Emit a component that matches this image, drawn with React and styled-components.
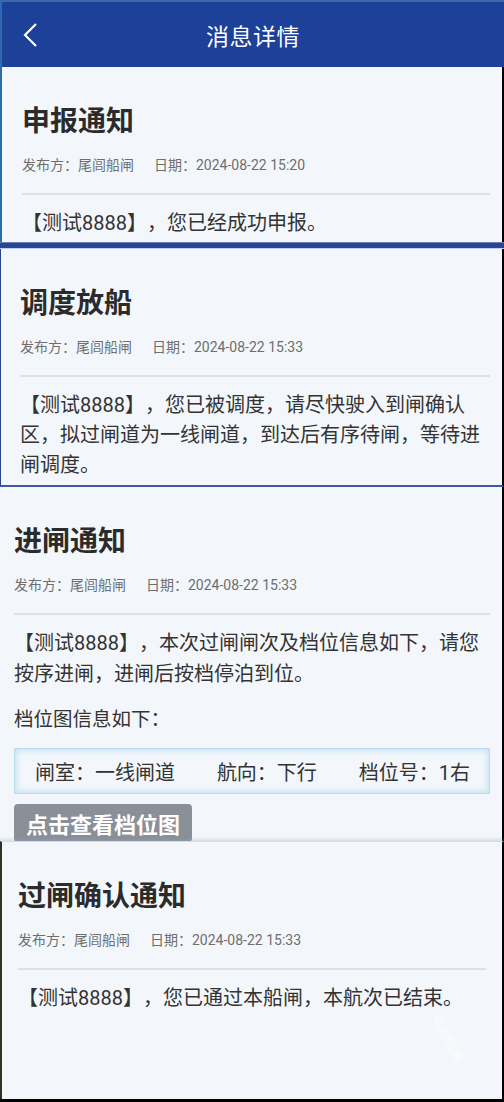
import React from "react";
import styled, { createGlobalStyle } from "styled-components";

const Global = createGlobalStyle`
  html, body { margin: 0; padding: 0; background: #000; }
  body {
    font-family: "Noto Sans CJK SC", "Noto Sans", sans-serif;
    text-spacing-trim: space-all;
  }
  * { box-sizing: border-box; }
`;

const Screen = styled.div`
  width: 504px;
  height: 1102px;
  display: flex;
  flex-direction: column;
  background: #000;
  overflow: hidden;
  padding-bottom: 2px;
`;

const Header = styled.header`
  height: 67px;
  flex: none;
  background: #1d4099;
  border-top: 2px solid #3b6aa8;
  border-left: 2px solid #2a6cb0;
  display: flex;
  align-items: center;
  justify-content: center;
  position: relative;
  color: #fff;
`;

const Back = styled.button`
  position: absolute;
  left: 18px;
  top: 50%;
  transform: translateY(-50%);
  background: none;
  border: 0;
  padding: 0;
  display: flex;
`;

const HeaderTitle = styled.h1`
  margin: 0;
  font-size: 23px;
  font-weight: 400;
  letter-spacing: 0.5px;
`;

const Card = styled.section`
  flex: none;
  height: ${(p) => p.$h}px;
  background: #f3f7fb;
  padding: 0 ${(p) => p.$pr}px 0 ${(p) => p.$pl}px;
  border-left: ${(p) => p.$bl || "none"};
  border-right: ${(p) => p.$br || "none"};
  border-bottom: ${(p) => p.$bb || "none"};
  border-top: ${(p) => p.$bt || "none"};
  box-shadow: ${(p) => p.$shadow || "none"};
  position: relative;
  overflow: hidden;
`;

const Title = styled.h2`
  margin: 0;
  padding-top: 33px;
  height: 79px;
  font-size: 28px;
  line-height: 38px;
  font-weight: 700;
  color: #2b2b2b;
`;

const Meta = styled.div`
  display: flex;
  gap: 20px;
  font-size: 14px;
  color: #6e6e6e;
  height: 47px;
  padding-top: 9px;
  line-height: 20px;
  font-family: "Roboto", "Noto Sans CJK SC", sans-serif;
`;

const Divider = styled.hr`
  margin: 0;
  border: 0;
  border-top: 2px solid #dde1e5;
`;

const Body = styled.p`
  margin: 0;
  padding-top: 13px;
  font-size: 20px;
  line-height: ${(p) => p.$lh || 30}px;
  color: #333;
  font-family: "Roboto", "Noto Sans CJK SC", sans-serif;
`;

const Sub = styled.p`
  margin: 0;
  padding-top: 13px;
  font-size: 19.5px;
  line-height: 30px;
  color: #333;
`;

const InfoBox = styled.div`
  margin-top: 15px;
  height: 46px;
  border: 1px solid #b9dcef;
  box-shadow: inset 0 0 6px 2px #c8e4f3;
  background: #f3f7fb;
  display: flex;
  align-items: center;
  justify-content: space-between;
  padding: 0 19px 0 20px;
  font-size: 20px;
  color: #333;
  font-family: "Roboto", "Noto Sans CJK SC", sans-serif;
`;

const ViewButton = styled.button`
  margin-top: 10px;
  height: 38px;
  width: 178px;
  padding: 0;
  background: #8a9098;
  color: #fff;
  border: 0;
  border-radius: 4px;
  font-family: "Noto Sans CJK SC", sans-serif;
  font-size: 22px;
  font-weight: 700;
  line-height: 36px;
  display: block;
`;

const BlueBar = styled.div`
  flex: none;
  height: 7px;
  background: #2a4494;
  border-top: 1px solid #6a7fb8;
  border-bottom: 1px solid #bcd0f4;
`;

const Watermark = styled.div`
  position: absolute;
  right: 28px;
  bottom: 52px;
  transform: rotate(60deg);
  color: rgba(255, 255, 255, 0.7);
  font-size: 13px;
`;

const meta = (d) => (
  <Meta>
    <span>发布方：尾闾船闸</span>
    <span>日期：2024-08-22 {d}</span>
  </Meta>
);

export default function App() {
  return (
    <>
      <Global />
      <Screen>
        <Header>
          <Back aria-label="返回">
            <svg width="20" height="28" viewBox="0 0 20 28">
              <path d="M16 3 L5 14 L16 25" fill="none" stroke="#fff" strokeWidth="2.2" />
            </svg>
          </Back>
          <HeaderTitle>消息详情</HeaderTitle>
        </Header>

        <Card $h={175} $pl={20} $pr={12} $bl="2px solid #2a6cb0" $br="2px solid #000">
          <Title>申报通知</Title>
          {meta("15:20")}
          <Divider />
          <Body>【测试8888】，您已经成功申报。</Body>
        </Card>

        <BlueBar />

        <Card $h={238} $pl={19} $pr={12} $bl="1px solid #2a4494" $br="2px solid #000" $bb="2px solid #3e5aa0">
          <Title>调度放船</Title>
          {meta("15:33")}
          <Divider />
          <Body>【测试8888】，您已被调度，请尽快驶入到闸确认区，拟过闸道为一线闸道，到达后有序待闸，等待进闸调度。</Body>
        </Card>

        <Card $h={354} $pl={14} $pr={12} $br="2px solid #000">
          <Title>进闸通知</Title>
          {meta("15:33")}
          <Divider />
          <Body $lh={31}>【测试8888】，本次过闸闸次及档位信息如下，请您按序进闸，进闸后按档停泊到位。</Body>
          <Sub>档位图信息如下：</Sub>
          <InfoBox>
            <span>闸室：一线闸道</span>
            <span>航向：下行</span>
            <span>档位号：1右</span>
          </InfoBox>
          <ViewButton>点击查看档位图</ViewButton>
        </Card>

        <Card $h={258} $pl={16} $pr={16} $bl="2px solid #2e3327" $br="2px solid #000" $bt="1px solid #d6dbe6" $shadow="0 -2px 3px rgba(150,160,190,0.3)">
          <Title>过闸确认通知</Title>
          {meta("15:33")}
          <Divider />
          <Body>【测试8888】，您已通过本船闸，本航次已结束。</Body>
          <Watermark>尾闾船闸</Watermark>
        </Card>
      </Screen>
    </>
  );
}
